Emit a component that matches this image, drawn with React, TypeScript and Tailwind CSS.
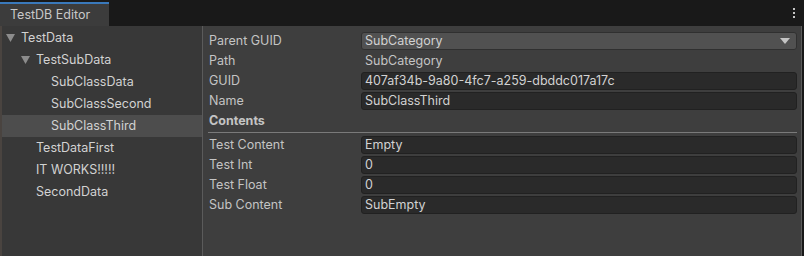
import { ReactNode } from "react";

const TREE: { label: string; depth: number; arrow?: boolean; selected?: boolean }[] = [
  { label: "TestData", depth: 0, arrow: true },
  { label: "TestSubData", depth: 1, arrow: true },
  { label: "SubClassData", depth: 2 },
  { label: "SubClassSecond", depth: 2 },
  { label: "SubClassThird", depth: 2, selected: true },
  { label: "TestDataFirst", depth: 1 },
  { label: "IT WORKS!!!!!", depth: 1 },
  { label: "SecondData", depth: 1 },
];

function Arrow() {
  return (
    <svg width="9" height="8" viewBox="0 0 9 8" className="shrink-0">
      <path d="M0 0 L9 0 L4.5 8 Z" fill="#8c8c8c" />
    </svg>
  );
}

function Row({ label, children }: { label: string; children: ReactNode }) {
  return (
    <div className="flex h-5 items-center">
      <div className="w-[158px] shrink-0 pl-[6px] text-[#c4c4c4]">{label}</div>
      <div className="flex-1 pr-[4px]">{children}</div>
    </div>
  );
}

function TextField({ value }: { value: string }) {
  return (
    <div className="flex h-[18px] items-center rounded-[3px] border border-[#212121] bg-[#2a2a2a] px-[3px] text-[#d2d2d2]">
      {value}
    </div>
  );
}

export default function App() {
  return (
    <div
      className="flex h-[256px] w-[804px] flex-col bg-[#191919] text-[12.5px]"
      style={{ fontFamily: "Inter, 'Noto Sans', sans-serif" }}
    >
      {/* Tab strip */}
      <div className="flex h-[26px] shrink-0 items-end justify-between">
        <div className="flex h-[24px] w-[109px] items-center border-t-2 border-[#3a79bb] bg-[#3c3c3c] pl-[10px] text-[#c8c8c8]">
          TestDB Editor
        </div>
        <div className="flex h-[26px] w-[16px] flex-col items-center justify-center gap-[2px] pr-[4px]">
          <span className="h-[2px] w-[2px] bg-[#c4c4c4]" />
          <span className="h-[2px] w-[2px] bg-[#c4c4c4]" />
          <span className="h-[2px] w-[2px] bg-[#c4c4c4]" />
        </div>
      </div>

      <div className="flex flex-1 pr-[2px]">
        {/* Tree */}
        <div className="w-[203px] shrink-0 border-l-2 border-r border-l-[#4a4440] border-r-[#5b5b5b] bg-[#383838] pt-px text-[#d2d2d2]">
          {TREE.map((t) => (
            <div
              key={t.label}
              className={`flex h-[22px] items-center ${t.selected ? "bg-[#4d4d4d]" : ""}`}
              style={{ paddingLeft: 4 + t.depth * 15 }}
            >
              <div className="flex w-[15px] shrink-0 justify-start">{t.arrow && <Arrow />}</div>
              <span>{t.label}</span>
            </div>
          ))}
        </div>

        {/* Inspector */}
        <div className="flex-1 border-r border-[#5b5b5b] bg-[#3e3e3e] pt-[5px]">
          <Row label="Parent GUID">
            <div className="flex h-[18px] items-center justify-between rounded-[3px] border border-[#303030] bg-[#515151] pl-[3px] pr-[6px] text-[#d2d2d2]">
              SubCategory
              <svg width="10" height="6" viewBox="0 0 10 6">
                <path d="M0 0 L10 0 L5 6 Z" fill="#c4c4c4" />
              </svg>
            </div>
          </Row>
          <Row label="Path">
            <div className="pl-[4px] text-[#c4c4c4]">SubCategory</div>
          </Row>
          <Row label="GUID">
            <TextField value="407af34b-9a80-4fc7-a259-dbddc017a17c" />
          </Row>
          <Row label="Name">
            <TextField value="SubClassThird" />
          </Row>
          <div className="flex h-5 items-center pl-[6px] font-bold text-[#c4c4c4]">Contents</div>
          <div className="ml-[5px] mr-[4px] mb-[2px] mt-[1px] h-px bg-[#7a7a7a]" />
          <Row label="Test Content">
            <TextField value="Empty" />
          </Row>
          <Row label="Test Int">
            <TextField value="0" />
          </Row>
          <Row label="Test Float">
            <TextField value="0" />
          </Row>
          <Row label="Sub Content">
            <TextField value="SubEmpty" />
          </Row>
        </div>
      </div>
    </div>
  );
}
